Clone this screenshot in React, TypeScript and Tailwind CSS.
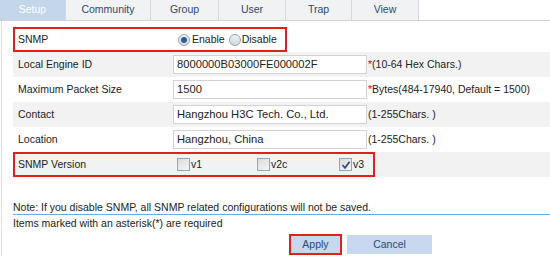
import React from "react";

const tabs = [
  { label: "Setup", w: "w-[66px]", active: true },
  { label: "Community", w: "w-[85px]" },
  { label: "Group", w: "w-[68px]" },
  { label: "User", w: "w-[67px]" },
  { label: "Trap", w: "w-[66px]" },
  { label: "View", w: "w-[67px]" },
];

function Radio({ checked }: { checked?: boolean }) {
  return (
    <span className="inline-flex w-[12px] h-[12px] rounded-full border border-[#9aa3ad] bg-gradient-to-b from-[#eef1f4] to-[#d5dbe2] items-center justify-center shrink-0">
      {checked && <span className="w-[6px] h-[6px] rounded-full bg-[#2f5f93]" />}
    </span>
  );
}

function Check({ checked }: { checked?: boolean }) {
  return (
    <span className="inline-flex w-[13px] h-[13px] border border-[#9ca3aa] bg-gradient-to-br from-[#dcdcdc] to-[#f5f5f5] items-center justify-center shrink-0">
      {checked && (
        <svg width="10" height="10" viewBox="0 0 10 10">
          <path d="M1.5 5 L4 7.8 L8.6 1.8" stroke="#3b4a8c" strokeWidth="1.8" fill="none" />
        </svg>
      )}
    </span>
  );
}

function Row({
  label,
  value,
  note,
  star,
  gray,
}: {
  label: string;
  value: string;
  note: string;
  star?: boolean;
  gray?: boolean;
}) {
  return (
    <div className={`flex items-center h-[25px] ${gray ? "bg-[#f2f2f2]" : "bg-white"}`}>
      <div className="w-[160px] pl-[5px]">{label}</div>
      <div className="w-[194px] h-[19px] border border-[#d2d2d2] bg-white px-[3px] leading-[17px] shrink-0 text-[11.2px]">
        {value}
      </div>
      <div className="pl-[1px] whitespace-nowrap">
        {star && <span className="text-[#e00]">*</span>}
        {note}
      </div>
    </div>
  );
}

export default function App() {
  return (
    <div
      className="w-[550px] h-[256px] bg-white overflow-hidden text-[10.5px] text-[#222]"
      style={{ fontFamily: '"Liberation Sans", Arial, sans-serif' }}
    >
      <div className="flex h-[21px] border-b border-[#cfd3d8] bg-white">
        {tabs.map((t) => (
          <div
            key={t.label}
            className={`${t.w} h-[20px] flex items-center justify-center border-r border-[#d6d9dd] ${
              t.active ? "bg-[#c4d6ea] text-white" : "bg-[#f1f2f3] text-[#2c4a6e]"
            }`}
          >
            {t.label}
          </div>
        ))}
      </div>
      <div className="border-l border-[#e2e2e2] ml-[1px] h-[235px] pl-[11px] pt-[6px]">
        {/* SNMP row */}
        <div className="flex items-center h-[25px]">
          <div className="flex items-center h-[25px] w-[274px] border-2 border-[#e0201c] pl-[3px]">
            <div className="w-[158px]">SNMP</div>
            <div className="flex items-center pl-[2px]">
              <Radio checked />
              <span className="ml-[2px]">Enable</span>
              <span className="ml-[4px] flex items-center">
                <Radio />
              </span>
              <span className="ml-[1px]">Disable</span>
            </div>
          </div>
        </div>
        <Row label="Local Engine ID" value="8000000B03000FE000002F" note="(10-64 Hex Chars.)" star gray />
        <Row label="Maximum Packet Size" value="1500" note="Bytes(484-17940, Default = 1500)" star />
        <Row label="Contact" value="Hangzhou H3C Tech. Co., Ltd." note="(1-255Chars. )" gray />
        <Row label="Location" value="Hangzhou, China" note="(1-255Chars. )" />
        {/* SNMP Version */}
        <div className="h-[25px] bg-[#f2f2f2]">
          <div className="flex items-center h-[25px] w-[362px] border-2 border-[#e0201c] pl-[3px]">
            <div className="w-[159px]">SNMP Version</div>
            <div className="flex items-center w-[80px]">
              <Check />
              <span className="ml-[1px]">v1</span>
            </div>
            <div className="flex items-center w-[82px]">
              <Check />
              <span className="ml-[1px]">v2c</span>
            </div>
            <div className="flex items-center">
              <Check checked />
              <span className="ml-[1px]">v3</span>
            </div>
          </div>
        </div>
        <div className="mt-[24px] border-b border-[#6fa8dc] h-[14px] leading-[13px] whitespace-nowrap">
          Note: If you disable SNMP, all SNMP related configurations will not be saved.
        </div>
        <div className="leading-[14px] mt-[1px]">Items marked with an asterisk(*) are required</div>
        <div className="flex mt-[4px] pl-[276px] gap-[5px]">
          <div className="w-[53px] h-[21px] border-2 border-[#e0201c] bg-[#c6d7ee] text-[#2c4a78] flex items-center justify-center">
            Apply
          </div>
          <div className="w-[85px] h-[19px] mt-[1px] bg-[#c6d7ee] text-[#2c4a78] flex items-center justify-center">
            Cancel
          </div>
        </div>
      </div>
    </div>
  );
}
